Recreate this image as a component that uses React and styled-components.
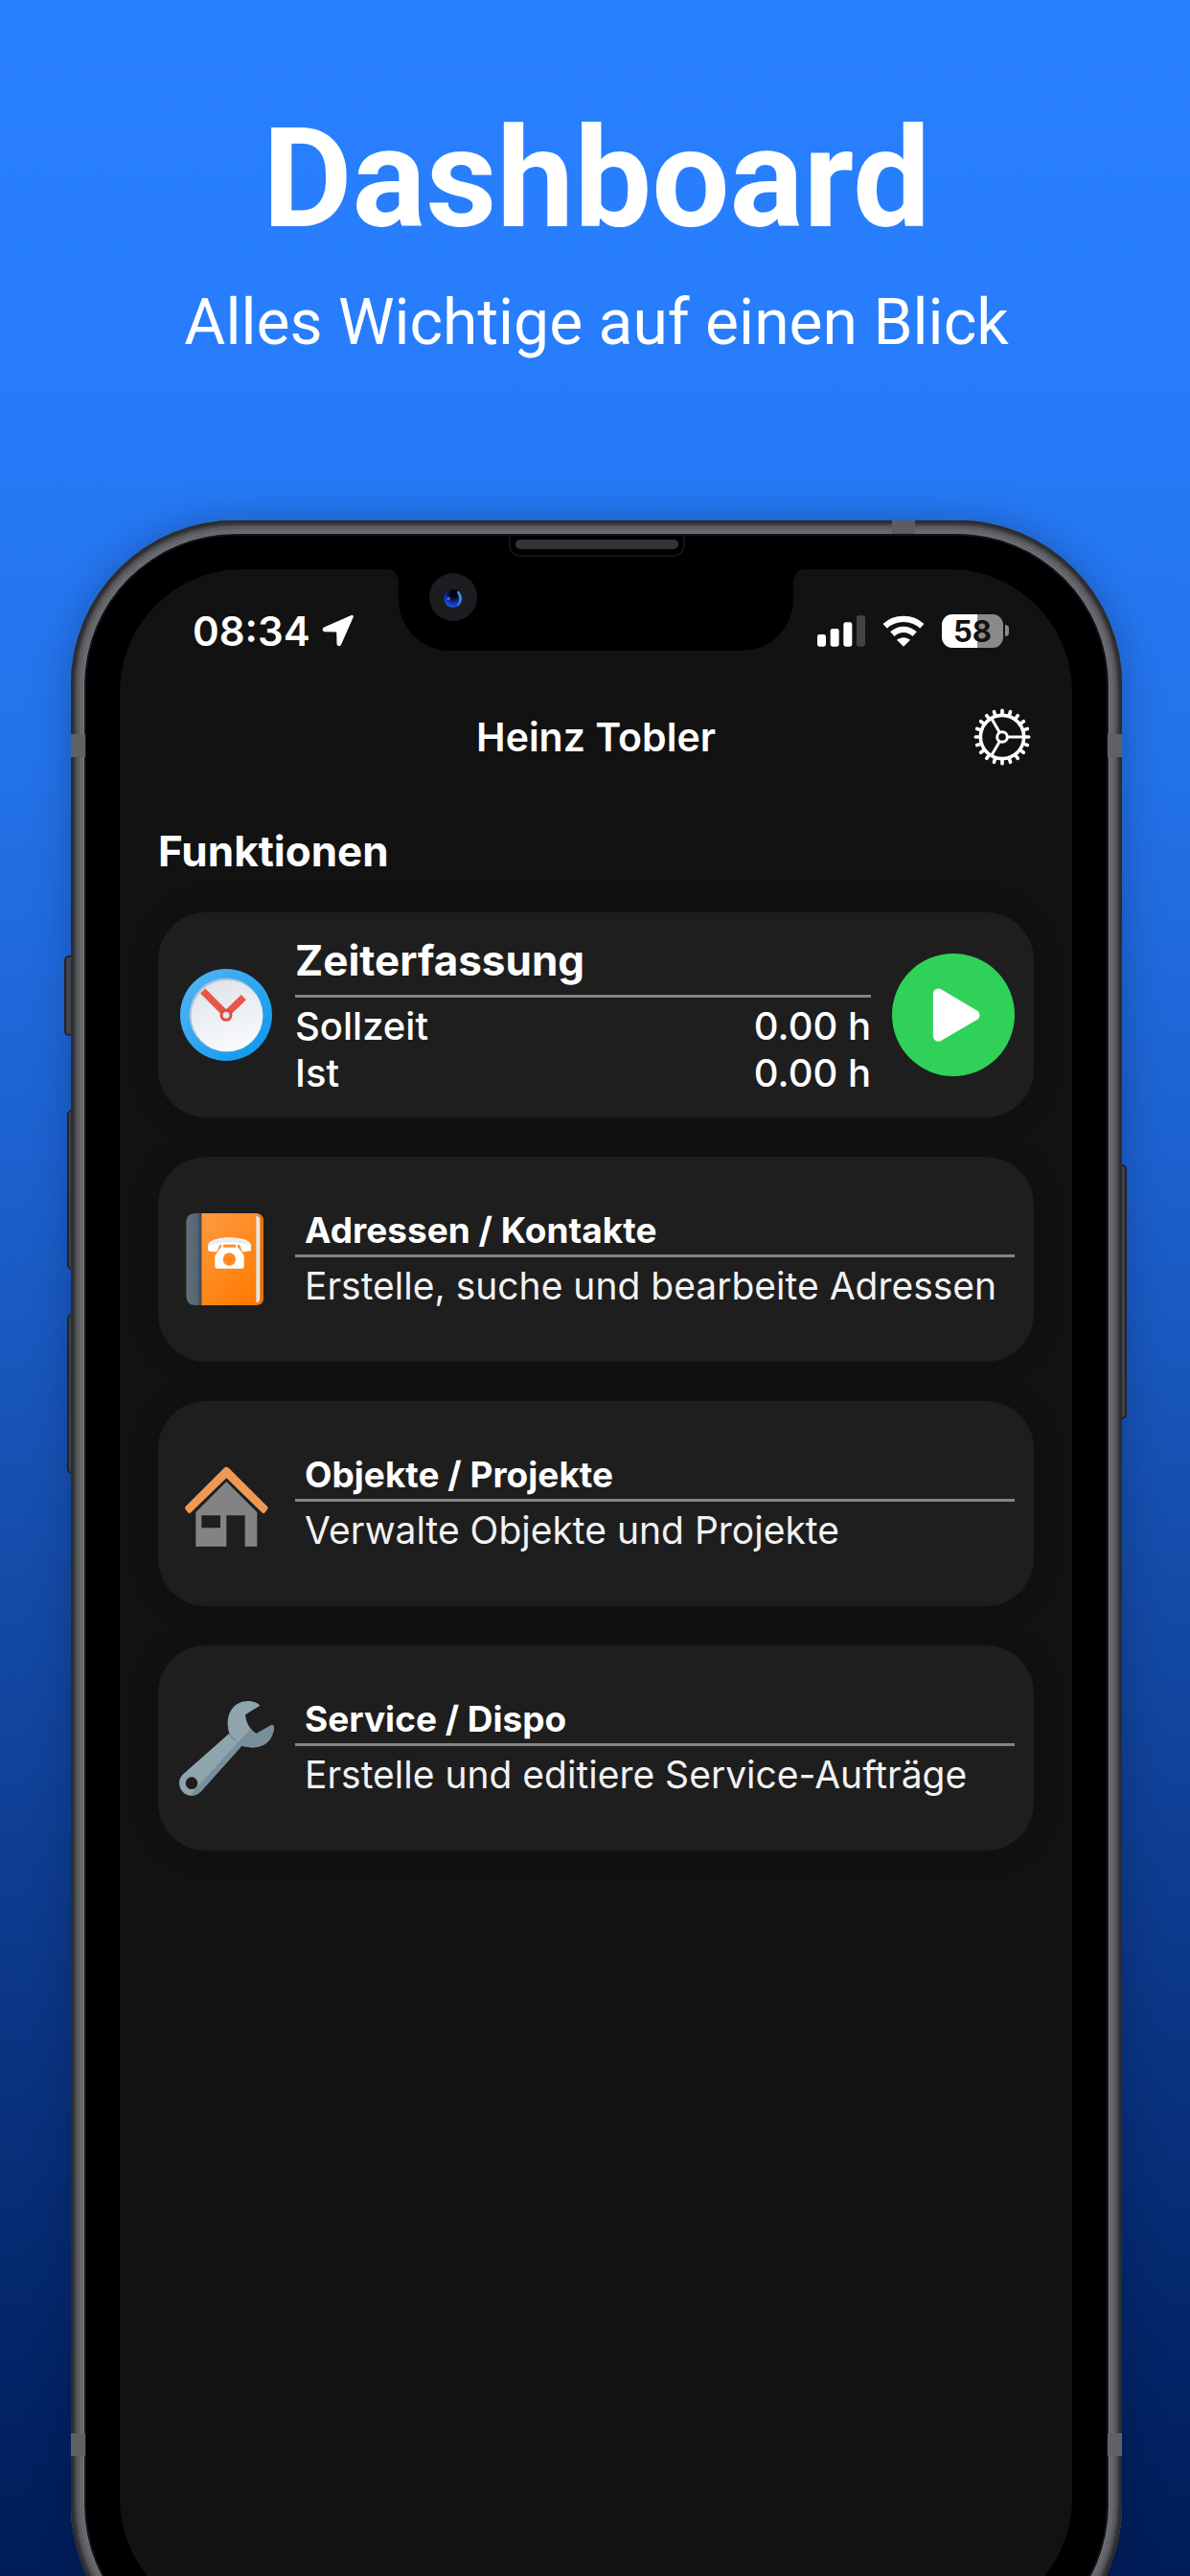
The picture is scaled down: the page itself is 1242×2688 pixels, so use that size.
import React from 'react';
import styled, { createGlobalStyle } from 'styled-components';

const services = [
  {
    slug: 'adressen',
    title: 'Adressen / Kontakte',
    text: 'Erstelle, suche und bearbeite Adressen',
    icon: () => <PhoneBookIcon />,
  },
  {
    slug: 'objekte',
    title: 'Objekte / Projekte',
    text: 'Verwalte Objekte und Projekte',
    icon: () => <HouseIcon />,
  },
  {
    slug: 'service',
    title: 'Service / Dispo',
    text: 'Erstelle und editiere Service-Aufträge',
    icon: () => <WrenchIcon />,
  },
];

const times = [
  { label: 'Sollzeit', value: '0.00 h' },
  { label: 'Ist', value: '0.00 h' },
];

const App = () => {
  return (
    <>
      <GlobalStyle />
      <Page>
        <Hero>
          <Headline>Dashboard</Headline>
          <Tagline>Alles Wichtige auf einen Blick</Tagline>
        </Hero>
        <Phone>
          <SideKey side="left" top={454} length={84} depth={7} />
          <SideKey side="left" top={615} length={167} depth={4} />
          <SideKey side="left" top={828} length={167} depth={4} />
          <SideKey side="right" top={672} length={266} depth={5} />
          <Body>
            <Band side="left" />
            <Band side="right" />
            <Band side="left" low />
            <Band side="right" low />
            <TopBand />
            <Speaker />
            <Screen>
              <Notch />
              <StatusBar>
                <Clock>
                  08:34
                  <LocationIcon />
                </Clock>
                <StatusIcons>
                  <SignalIcon />
                  <WifiIcon />
                  <Battery>
                    <BatteryLevel>58</BatteryLevel>
                    <BatteryTip />
                  </Battery>
                </StatusIcons>
              </StatusBar>
              <NavBar>
                <UserName>Heinz Tobler</UserName>
                <GearButton aria-label="Einstellungen">
                  <GearIcon />
                </GearButton>
              </NavBar>
              <Content>
                <SectionTitle>Funktionen</SectionTitle>
                <CardList>
                  <Card>
                    <ClockIcon />
                    <CardText>
                      <TimeTitle>Zeiterfassung</TimeTitle>
                      {times.map(time => (
                        <TimeRow key={time.label}>
                          <span>{time.label}</span>
                          <span>{time.value}</span>
                        </TimeRow>
                      ))}
                    </CardText>
                    <PlayButton aria-label="Start">
                      <PlayIcon />
                    </PlayButton>
                  </Card>
                  {services.map(service => (
                    <Card as="a" href={'#/' + service.slug} key={service.slug}>
                      {service.icon()}
                      <CardText>
                        <ServiceTitle>{service.title}</ServiceTitle>
                        <ServiceText>{service.text}</ServiceText>
                      </CardText>
                    </Card>
                  ))}
                </CardList>
              </Content>
            </Screen>
          </Body>
        </Phone>
      </Page>
    </>
  );
};

const Notch = () => (
  <NotchArea>
    <svg width="436" height="85" viewBox="0 0 436 85">
      <path d="M0 0C8 0 12 6 12 16V30C12 62 36 85 67 85H369C400 85 424 62 424 30V16C424 6 428 0 436 0Z" />
    </svg>
    <Camera width="50" height="50" viewBox="0 0 150 150">
      <defs>
        <radialGradient id="lens" cx="0.55" cy="0.25" r="0.75">
          <stop offset="0.25" stopColor="#02030c" />
          <stop offset="0.6" stopColor="#0a2a9c" />
          <stop offset="1" stopColor="#1a5af0" />
        </radialGradient>
      </defs>
      <circle cx="75" cy="75" r="75" fill="#1b1b20" />
      <circle cx="75" cy="79" r="29" fill="url(#lens)" />
      <path
        d="M91 57C103 70 103 89 89 101C97 89 97 72 88 60Z"
        fill="#4f93cf"
        stroke="#4f93cf"
        strokeWidth="3"
      />
      <circle cx="60" cy="80" r="5" fill="#6a5ae8" />
    </Camera>
  </NotchArea>
);

const LocationIcon = () => (
  <svg width="34" height="34" viewBox="884 364 104 104">
    <path
      d="M980 371L891 410Q890 414 893 415L931 416Q935 416 935 420L936 459Q938 463 941 459Z"
      fill="#fff"
      stroke="#fff"
      strokeWidth="9"
      strokeLinejoin="round"
    />
  </svg>
);

const SignalIcon = () => (
  <svg width="50" height="33" viewBox="157 364 150 99" fill="#fff">
    <rect x="157" y="424" width="27" height="38" rx="7" />
    <rect x="198" y="406" width="27" height="56" rx="7" />
    <rect x="239" y="386" width="27" height="76" rx="7" />
    <rect x="280" y="365" width="27" height="97" rx="7" fill="#444" />
  </svg>
);

const WifiIcon = () => (
  <svg width="44" height="33" viewBox="362 364 132 99">
    <g fill="none" stroke="#fff" strokeWidth="19">
      <path d="M370 398C402 368 454 368 486 398" />
      <path d="M393 423C413 404 443 404 463 423" />
    </g>
    <path d="M407 441C419 431 437 431 449 441L428 462Z" fill="#fff" />
  </svg>
);

const GearIcon = () => (
  <svg width="60" height="60" viewBox="-90 -90 180 180" fill="none" stroke="#fff">
    {[...Array(20).keys()].map(i => (
      <path
        key={i}
        d="M74 0H83"
        strokeWidth="11"
        strokeLinecap="round"
        transform={`rotate(${i * 18})`}
      />
    ))}
    <circle r="68" strokeWidth="11" />
    <circle r="16" strokeWidth="9" />
    {[0, 120, 240].map(angle => (
      <path key={angle} d="M18 0H66" strokeWidth="9" transform={`rotate(${angle})`} />
    ))}
  </svg>
);

const ClockIcon = () => (
  <CardIcon viewBox="108 508 300 300">
    <defs>
      <linearGradient id="rim" x1="0" y1="0" x2="1" y2="1">
        <stop offset="0.1" stopColor="#4fb3f3" />
        <stop offset="0.85" stopColor="#149bee" />
      </linearGradient>
      <linearGradient id="face" x1="0.3" y1="0" x2="0.6" y2="1">
        <stop offset="0" stopColor="#dfe4ea" />
        <stop offset="1" stopColor="#fafbfc" />
      </linearGradient>
    </defs>
    <circle cx="258" cy="658" r="144" fill="url(#rim)" />
    <circle cx="258" cy="658" r="115" fill="#b4c4d8" />
    <circle cx="261" cy="661" r="112" fill="url(#face)" />
    <path d="M185 583L258 656L313 603" fill="none" stroke="#e95648" strokeWidth="22" />
    <circle cx="258" cy="659" r="15" fill="#e3e7ec" stroke="#e3493d" strokeWidth="9" />
  </CardIcon>
);

const PhoneBookIcon = () => (
  <CardIcon viewBox="78 195 300 300">
    <defs>
      <linearGradient id="cover" x1="0" y1="0" x2="0.7" y2="1">
        <stop offset="0" stopColor="#ff9a40" />
        <stop offset="1" stopColor="#ff7c04" />
      </linearGradient>
      <linearGradient id="spine" x1="0" y1="0" x2="1" y2="0">
        <stop offset="0" stopColor="#61707d" />
        <stop offset="0.7" stopColor="#566572" />
        <stop offset="1" stopColor="#3c4853" />
      </linearGradient>
    </defs>
    <path d="M151 201H133Q103 201 103 231V459Q103 489 133 489H151Z" fill="url(#spine)" />
    <path d="M151 201H322Q345 203 345 226V464Q345 487 322 489H151Z" fill="url(#cover)" />
    <path d="M334 206Q345 210 345 226V464Q345 482 334 486Z" fill="#e96f00" />
    <path d="M322 210Q334 210 334 222V468Q334 480 322 480Z" fill="#e4e4e6" />
    <path
      d="M171 302C175 268 302 268 306 302V318L285 322Q276 322 275 312L272 303Q271 299 264 299V306L281 328Q284 332 284 340V368Q283 374 277 374H200Q194 374 193 368V340Q193 332 197 328L213 306V299Q206 299 205 305L202 316Q201 322 193 322L176 320Q171 319 171 314Z"
      fill="#fff"
    />
    <path d="M172 306C175 268 302 268 305 306C288 287 190 287 172 306Z" fill="#e9eef4" />
    <path d="M219 299H258V308H219Z" fill="#ff8d29" />
    <circle cx="238" cy="345" r="20" fill="#ff8a22" />
  </CardIcon>
);

const HouseIcon = () => (
  <CardIcon viewBox="78 181 300 300">
    <path
      d="M229 262L325 358V465H287V368H229V465H133V358Z M151 368V407H210V368Z"
      fill="#838383"
      fillRule="evenodd"
    />
    <path
      d="M229 216Q233 216 236 219L357 340Q361 344 357 349L350 359Q345 364 340 359L229 251L118 359Q113 364 108 359L101 349Q97 344 101 340L222 219Q225 216 229 216Z"
      fill="#ee9a55"
    />
  </CardIcon>
);

const WrenchIcon = () => (
  <CardIcon viewBox="78 195 300 300">
    <defs>
      <clipPath id="wrench">
        <path
          clipRule="evenodd"
          d="M92 428L238 299C222 250 244 199 295 198C312 198 327 204 334 212L288 241C290 265 303 290 323 300L370 273Q378 273 378 283C374 325 340 356 277 338L150 480C134 498 108 499 93 483C78 467 77 444 92 428ZM120 436A19 19 0 1 0 120 474A19 19 0 1 0 120 436Z"
        />
      </clipPath>
    </defs>
    <g clipPath="url(#wrench)">
      <path d="M70 190H390V500H70Z" fill="#90a4ae" />
      <path d="M126 480L305 284L400 250V500H110Z" fill="#788f9b" />
      <path d="M236 296Q244 314 258 322" fill="none" stroke="#768c97" strokeWidth="5" />
    </g>
  </CardIcon>
);

const PlayIcon = () => (
  <svg width="128" height="128" viewBox="933 165 384 384">
    <path
      d="M1078 291L1191 358L1078 424Z"
      fill="#fff"
      stroke="#fff"
      strokeWidth="33"
      strokeLinejoin="round"
    />
  </svg>
);

const Colors = {
  screen: '#121212',
  card: '#1e1e1e',
  line: '#858488',
  green: '#30d158',
};

const Font = {
  big: '44px',
  middle: '41px',
  text: '39px',
  small: '37px',
};

const GlobalStyle = createGlobalStyle`
  * {
    box-sizing: border-box;
  }

  body {
    margin: 0;
    color: #fff;
    font-family: Inter, 'Noto Sans', sans-serif;
  }
`;

const Page = styled.main`
  height: 100vh;
  overflow: hidden;
  padding: 101px 71px 0 74px;
  background: linear-gradient(
    #2980ff 0%,
    #277dfc 13%,
    #2372e8 30%,
    #1c61cf 45%,
    #1650b0 58%,
    #0d3a8c 75%,
    #022262 94%,
    #011d58 100%
  );
`;

const Hero = styled.header`
  display: flex;
  flex-direction: column;
  gap: 24px;
  margin-bottom: 166px;
  font-family: Roboto, sans-serif;
  text-align: center;
`;

const Headline = styled.h1`
  margin: 0;
  font-size: 144px;
  line-height: 172px;
  font-weight: 700;
`;

const Tagline = styled.p`
  margin: 0;
  font-size: 66px;
  line-height: 80px;
`;

const Phone = styled.div`
  position: relative;
`;

const Body = styled.div`
  position: relative;
  display: flex;
  aspect-ratio: 1097 / 2243;
  padding: 51px 52px 51px 51px;
  border-radius: 172px;
  background: #000;
  box-shadow:
    inset 0 0 0 2px #2b2c2e,
    inset 0 0 0 4px #343538,
    inset 0 0 0 6px #48494c,
    inset 0 0 0 9px #5a5b5f,
    inset 0 0 0 13px #66676c,
    inset 0 0 0 14px #77787d,
    inset 0 0 0 16px #14151c,
    0 0 40px rgba(0, 10, 40, 0.28);
`;

const SideKey = styled.i`
  position: absolute;
  top: ${props => props.top}px;
  ${props => props.side}: -${props => props.depth}px;
  width: 14px;
  height: ${props => props.length}px;
  border: 2px solid #26272a;
  border-radius: 5px;
  background: #4b4c4f;
`;

const Band = styled.i`
  position: absolute;
  ${props => (props.low ? 'bottom' : 'top')}: 223px;
  ${props => props.side}: 0;
  width: 15px;
  height: 24px;
  background: #606164;
`;

const TopBand = styled.i`
  position: absolute;
  top: 0;
  right: 216px;
  width: 24px;
  height: 14px;
  background: #5c5d60;
`;

const Speaker = styled.i`
  position: absolute;
  top: 14px;
  left: 50%;
  width: 184px;
  height: 24px;
  margin-left: -92px;
  border: 2px solid #111218;
  border-top: 0;
  border-radius: 0 0 12px 12px;

  &::after {
    content: '';
    display: block;
    height: 10px;
    margin: 6px 5px;
    border-radius: 5px;
    background: #343434;
  }
`;

const Screen = styled.div`
  position: relative;
  flex: 1;
  border-radius: 128px;
  background: ${Colors.screen};
`;

const NotchArea = styled.div`
  position: absolute;
  top: 0;
  left: 50%;
  height: 85px;
  margin-left: -218px;
`;

const Camera = styled.svg`
  position: absolute;
  top: 4px;
  left: 44px;
`;

const StatusBar = styled.div`
  display: flex;
  align-items: center;
  justify-content: space-between;
  height: 128px;
  padding: 0 66px 0 76px;
`;

const Clock = styled.div`
  display: flex;
  align-items: center;
  gap: 12px;
  font-size: 42px;
  font-weight: 600;
`;

const StatusIcons = styled.div`
  display: flex;
  align-items: center;
  gap: 18px;
`;

const Battery = styled.div`
  display: flex;
  align-items: center;
  gap: 2px;
`;

const BatteryLevel = styled.div`
  width: 64px;
  border-radius: 11px;
  background: linear-gradient(90deg, #fff 58%, #8a8a8a 58%);
  color: ${Colors.screen};
  font-size: 31px;
  line-height: 35px;
  font-weight: 700;
  text-align: center;
`;

const BatteryTip = styled.i`
  width: 4px;
  height: 12px;
  border-radius: 0 4px 4px 0;
  background: #8a8a8a;
`;

const NavBar = styled.div`
  display: grid;
  grid-template-columns: 1fr auto 1fr;
  align-items: center;
  height: 94px;
  padding: 0 43px;
`;

const UserName = styled.h2`
  grid-column: 2;
  margin: 0;
  font-size: ${Font.middle};
  font-weight: 600;
`;

const GearButton = styled.button`
  display: flex;
  justify-self: end;
  padding: 0;
  border: 0;
  background: none;
`;

const Content = styled.section`
  padding: 45px 40px;
`;

const SectionTitle = styled.h3`
  margin: 0 0 37px;
  font-size: ${Font.big};
  line-height: 54px;
  font-weight: 700;
`;

const CardList = styled.div`
  display: flex;
  flex-direction: column;
  gap: 41px;
`;

const Card = styled.div`
  display: flex;
  align-items: center;
  gap: 22px;
  min-height: 214px;
  padding: 0 20px 0 21px;
  border-radius: 50px;
  background: ${Colors.card};
  box-shadow: 0 0 30px rgba(0, 0, 0, 0.2);
  color: #fff;
  text-decoration: none;
`;

const CardIcon = styled.svg`
  flex: none;
  width: 100px;
  height: 100px;
`;

const CardText = styled.div`
  flex: 1;
`;

const TimeTitle = styled.h4`
  margin: 0 0 5px;
  padding-bottom: 8px;
  border-bottom: 3px solid ${Colors.line};
  font-size: ${Font.big};
  line-height: 56px;
  font-weight: 700;
`;

const TimeRow = styled.div`
  display: flex;
  justify-content: space-between;
  font-size: 40px;
  line-height: 49px;
  font-weight: 500;
`;

const ServiceTitle = styled.h4`
  margin: 0 0 6px;
  padding: 0 10px 3px;
  border-bottom: 3px solid ${Colors.line};
  font-size: ${Font.small};
  line-height: 44px;
  font-weight: 700;
`;

const ServiceText = styled.p`
  margin: 0;
  padding-left: 10px;
  color: #f2f2f2;
  font-size: ${Font.text};
  line-height: 48px;
  white-space: nowrap;
`;

const PlayButton = styled.button`
  display: flex;
  padding: 0;
  border: 0;
  border-radius: 50%;
  background: ${Colors.green};
`;

export default App;
